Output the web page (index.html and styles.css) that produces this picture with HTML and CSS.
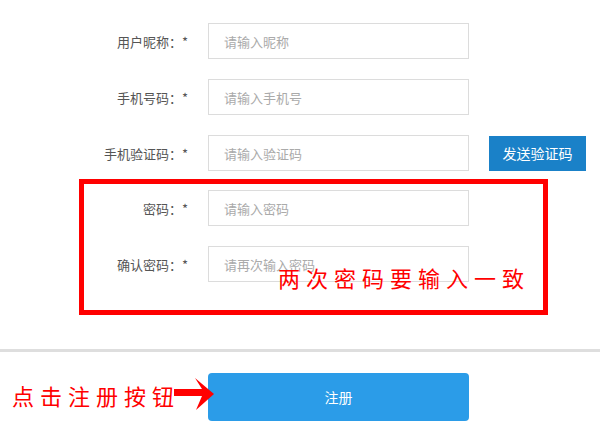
FILE: index.html
```html
<!DOCTYPE html>
<html lang="zh-CN">
<head>
  <meta charset="UTF-8" />
  <meta name="viewport" content="width=device-width, initial-scale=1.0"/>
  <title>注册</title>
  <link rel="stylesheet" href="styles.css">
</head>
<body>

  <form class="reg-form">
    <div class="row">
      <label class="row-label" for="nick">用户昵称：*</label>
      <input class="row-input" type="text" id="nick" placeholder="请输入昵称" />
    </div>

    <div class="row">
      <label class="row-label" for="phone">手机号码：*</label>
      <input class="row-input" type="text" id="phone" placeholder="请输入手机号" />
    </div>

    <div class="row row-code">
      <label class="row-label" for="code">手机验证码：*</label>
      <input class="row-input" type="text" id="code" placeholder="请输入验证码" />
      <button type="button" class="send-btn">发送验证码</button>
    </div>

    <!-- password group, marked in red -->
    <div class="mark-box">
      <div class="row">
        <label class="row-label" for="pwd">密码：*</label>
        <input class="row-input" type="password" id="pwd" placeholder="请输入密码" />
      </div>
      <div class="row row-last">
        <label class="row-label" for="pwd2">确认密码：*</label>
        <input class="row-input" type="password" id="pwd2" placeholder="请再次输入密码" />
      </div>
      <div class="mark-text">两次密码要输入一致</div>
    </div>

    <div class="divider"></div>

    <div class="footer">
      <div class="footer-note">点击注册按钮</div>
      <button type="submit" class="reg-btn">注册</button>
      <svg class="arrow" width="44" height="34" viewBox="0 0 44 34">
        <polygon fill="#ff0000" points="0,11 28,11 21,0 40,16 22,32 28,18 0,18" />
      </svg>
    </div>
  </form>

</body>
</html>
```

FILE: styles.css
```css
body {
  font-family: "Noto Sans CJK SC", "Liberation Sans", sans-serif;
  margin: 0;
  background: #fff;
}

.reg-form {
  padding-top: 23px;
}

.row {
  display: flex;
  align-items: center;
  height: 36px;
  margin-bottom: 20px;
}

.row-label {
  width: 188px;
  margin-right: 20px;
  text-align: right;
  font-size: 13px;
  color: #555;
}

.row-input {
  width: 261px;
  height: 36px;
  box-sizing: border-box;
  border: 1px solid #dcdcdc;
  padding: 0 15px;
  font-family: inherit;
  font-size: 13px;
  color: #333;
  outline: none;
}

.row-input::placeholder {
  color: #aaa;
}

.send-btn {
  margin-left: 20px;
  width: 97px;
  height: 35px;
  border: none;
  background: #1a81c8;
  color: #fff;
  font-family: inherit;
  font-size: 14px;
}

.row-code {
  margin-bottom: 8px;
}

.mark-box {
  position: relative;
  margin-left: 79px;
  width: 469px;
  box-sizing: border-box;
  border: 5px solid #ff0000;
  padding: 6px 0 28px;
}

.mark-box .row-label {
  width: 104px;
}

.mark-box .row-last {
  margin-bottom: 0;
}

.mark-text {
  position: absolute;
  left: 194px;
  top: 82px;
  font-size: 22px;
  letter-spacing: 6px;
  color: #ff0000;
  line-height: 1;
}

.divider {
  margin-top: 34px;
  height: 3px;
  background: #dedede;
}

.footer {
  position: relative;
  display: flex;
  align-items: center;
  margin-top: 21px;
}

.footer-note {
  width: 196px;
  padding-left: 12px;
  padding-bottom: 4px;
  font-size: 22px;
  letter-spacing: 6px;
  color: #ff0000;
  line-height: 1;
}

.reg-btn {
  width: 261px;
  height: 48px;
  border: none;
  border-radius: 4px;
  background: #2b9ce8;
  color: #fff;
  font-family: inherit;
  font-size: 14px;
}

.arrow {
  position: absolute;
  left: 174px;
  top: 5px;
}
```
